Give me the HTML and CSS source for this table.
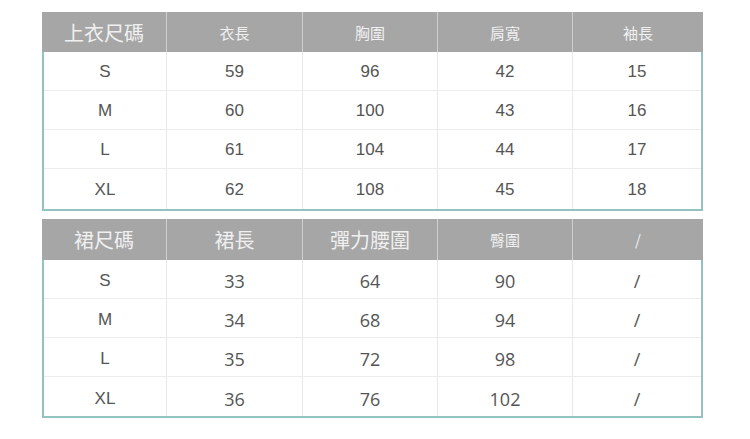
FILE: index.html
```html
<!DOCTYPE html>
<html lang="zh-Hant">
<head>
<meta charset="utf-8">
<link rel="stylesheet" href="styles.css">
</head>
<body>
<div class="page">
  <div class="chart">
    <div class="head">
      <div class="hc big">上衣尺碼</div>
      <div class="hc">衣長</div>
      <div class="hc">胸圍</div>
      <div class="hc">肩寬</div>
      <div class="hc">袖長</div>
    </div>
    <div class="body">
      <div class="row"><div class="c">S</div><div class="c">59</div><div class="c">96</div><div class="c">42</div><div class="c">15</div></div>
      <div class="row"><div class="c">M</div><div class="c">60</div><div class="c">100</div><div class="c">43</div><div class="c">16</div></div>
      <div class="row"><div class="c">L</div><div class="c">61</div><div class="c">104</div><div class="c">44</div><div class="c">17</div></div>
      <div class="row last"><div class="c">XL</div><div class="c">62</div><div class="c">108</div><div class="c">45</div><div class="c">18</div></div>
    </div>
  </div>
  <div class="chart skirt">
    <div class="head">
      <div class="hc big">裙尺碼</div>
      <div class="hc big">裙長</div>
      <div class="hc big">彈力腰圍</div>
      <div class="hc">臀圍</div>
      <div class="hc">/</div>
    </div>
    <div class="body">
      <div class="row"><div class="c">S</div><div class="c">33</div><div class="c">64</div><div class="c">90</div><div class="c">/</div></div>
      <div class="row"><div class="c">M</div><div class="c">34</div><div class="c">68</div><div class="c">94</div><div class="c">/</div></div>
      <div class="row"><div class="c">L</div><div class="c">35</div><div class="c">72</div><div class="c">98</div><div class="c">/</div></div>
      <div class="row last"><div class="c">XL</div><div class="c">36</div><div class="c">76</div><div class="c">102</div><div class="c">/</div></div>
    </div>
  </div>
</div>
</body>
</html>
```
FILE: styles.css
```css
*, *::before, *::after {
  box-sizing: border-box;
}
html, body {
  margin: 0;
  padding: 0;
  background: #ffffff;
}
.page {
  padding: 12px 0 0 42px;
  display: flex;
  flex-direction: column;
  gap: 8px;
}
.chart {
  width: 661px;
}
.head {
  display: grid;
  grid-template-columns: 124px 136px 135px 135px 131px;
  height: 40px;
  background: #a6a6a6;
}
.skirt .head {
  height: 41px;
}
.hc {
  display: flex;
  align-items: center;
  justify-content: center;
  color: #f0f0f0;
  font-family: "Noto Sans CJK TC", "Noto Sans", sans-serif;
  font-size: 15px;
  font-weight: 400;
}
.hc + .hc {
  border-left: 1px solid #cfcfcf;
}
.hc.big {
  font-size: 20px;
}
.body {
  border: 2px solid #93c3bf;
  border-top: none;
}
.row {
  display: grid;
  grid-template-columns: 122px 136px 135px 135px 129px;
  height: 39px;
  border-bottom: 1px solid #ececec;
}
.row.last {
  border-bottom: none;
  height: 40px;
}
.c {
  display: flex;
  align-items: center;
  justify-content: center;
  padding-top: 2px;
  color: #555555;
  font-family: "Liberation Sans", Arial, sans-serif;
  font-size: 17px;
}
.c + .c {
  border-left: 1px solid #e8e8e8;
}
.skirt .row.last {
  height: 39px;
}
.skirt .c {
  padding-top: 4px;
}
.skirt .c + .c {
  font-family: "Open Sans", sans-serif;
  font-size: 18px;
}
```
